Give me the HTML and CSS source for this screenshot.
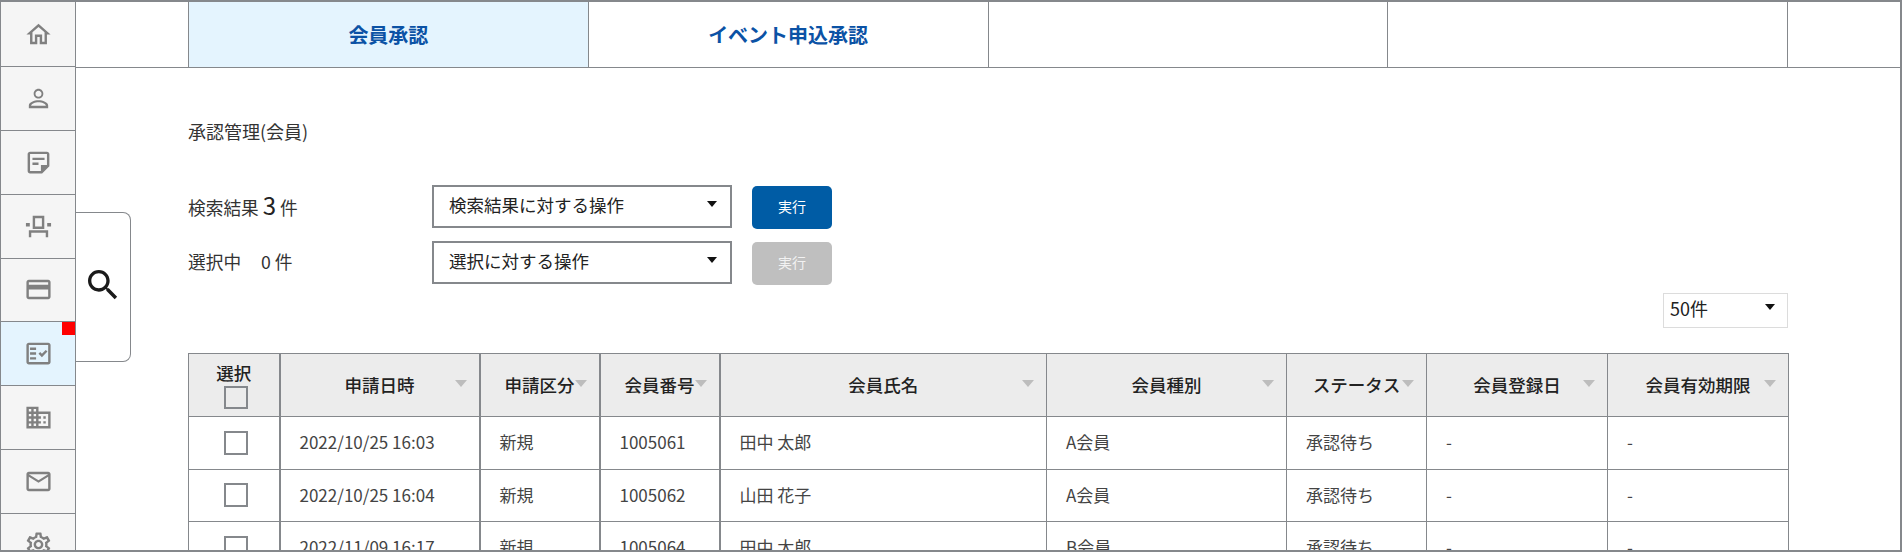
FILE: index.html
```html
<!DOCTYPE html>
<html lang="ja">
<head>
<meta charset="utf-8">
<title>承認管理(会員)</title>
<link rel="stylesheet" href="styles.css">
</head>
<body>
<div class="frame">
  <nav class="side">
    <a class="side-item"><svg class="ico" viewBox="0 0 24 24"><path d="M12 5.69l5 4.5V18h-2v-6H9v6H7v-7.81l5-4.5M12 3L2 12h3v8h6v-6h2v6h6v-8h3L12 3z"/></svg></a>
    <a class="side-item"><svg class="ico" viewBox="0 0 24 24"><path d="M12 5.500c1.400 0 2.500 1.100 2.500 2.500s-1.100 2.500-2.500 2.500S9.500 9.400 9.500 8s1.100-2.500 2.500-2.500M12 4C9.800 4 8 5.800 8 8s1.800 4 4 4 4-1.800 4-4-1.800-4-4-4zM12 13.500c-3.500 0-8 1.700-8 4.200V20h16v-2.300c0-2.500-4.500-4.200-8-4.200zm0 1.700c2.800 0 5.800 1.200 6.100 2.900H5.900c.3-1.700 3.300-2.900 6.100-2.900z"/></svg></a>
    <a class="side-item"><svg class="ico" viewBox="0 0 24 24"><path d="M19 5v9h-5v5H5V5h14m0-2H5C3.900 3 3 3.900 3 5v14c0 1.100.9 2 2 2h10l6-6V5c0-1.100-.9-2-2-2zM12 14H7v-2h5v2zM17 10H7V8h10v2z"/></svg></a>
    <a class="side-item"><svg class="ico" viewBox="0 0 30 30"><path d="M9 4h12v13.500H9V4zm2.500 2.500V15h7V6.500h-7zM2 11.500h4V15H2zM24 11.500h4V15h-4zM5 19h20v7h-2.500v-4.500h-15V26H5v-7z"/></svg></a>
    <a class="side-item"><svg class="ico" viewBox="0 0 24 24"><path d="M20 4H4c-1.110 0-1.990.89-1.990 2L2 18c0 1.110.89 2 2 2h16c1.110 0 2-.89 2-2V6c0-1.110-.89-2-2-2zm0 14H4v-6h16v6zm0-10H4V6h16v2z"/></svg></a>
    <a class="side-item is-active"><span class="badge"></span><svg class="ico" viewBox="0 0 24 24"><path d="M20 3H4c-1.100 0-2 .9-2 2v14c0 1.100.9 2 2 2h16c1.100 0 2-.9 2-2V5c0-1.100-.9-2-2-2zm0 16H4V5h16v14z"/><path d="M19.410 10.420l-1.420-1.420-3.170 3.170-1.410-1.420L12 12.170 14.820 15zM5 7h5v2H5zM5 11h5v2H5zM5 15h5v2H5z"/></svg></a>
    <a class="side-item"><svg class="ico" viewBox="0 0 24 24"><path d="M12 7V3H2v18h20V7H12zM6 19H4v-2h2v2zm0-4H4v-2h2v2zm0-4H4V9h2v2zm0-4H4V5h2v2zm4 12H8v-2h2v2zm0-4H8v-2h2v2zm0-4H8V9h2v2zm0-4H8V5h2v2zm10 12h-8v-2h2v-2h-2v-2h2v-2h-2V9h8v10zm-2-8h-2v2h2v-2zm0 4h-2v2h2v-2z"/></svg></a>
    <a class="side-item"><svg class="ico" viewBox="0 0 24 24"><path d="M20 4H4c-1.100 0-1.990.9-1.990 2L2 18c0 1.100.9 2 2 2h16c1.100 0 2-.9 2-2V6c0-1.100-.9-2-2-2zm0 14H4V8l8 5 8-5v10zm-8-7L4 6h16l-8 5z"/></svg></a>
    <a class="side-item"><svg class="ico" viewBox="0 0 24 24"><path d="M19.430 12.980c.04-.32.07-.64.07-.98 0-.34-.03-.66-.07-.98l2.110-1.650c.19-.15.24-.42.12-.64l-2-3.460c-.09-.16-.26-.25-.44-.25-.06 0-.12.01-.17.03l-2.490 1c-.52-.4-1.080-.73-1.690-.98l-.38-2.650C14.460 2.180 14.250 2 14 2h-4c-.25 0-.46.18-.49.42l-.38 2.650c-.61.25-1.170.59-1.690.98l-2.490-1c-.06-.02-.12-.03-.18-.03-.17 0-.34.09-.43.25l-2 3.460c-.13.22-.07.49.12.64l2.110 1.650c-.04.32-.07.65-.07.98 0 .33.03.66.07.98l-2.110 1.650c-.19.15-.24.42-.12.64l2 3.460c.09.16.26.25.44.25.06 0 .12-.01.17-.03l2.490-1c.52.4 1.080.73 1.690.98l.38 2.650c.03.24.24.42.49.42h4c.25 0 .46-.18.49-.42l.38-2.650c.61-.25 1.170-.59 1.690-.98l2.490 1c.06.02.12.03.18.03.17 0 .34-.09.43-.25l2-3.460c.12-.22.07-.49-.12-.64l-2.110-1.650zm-1.980-1.710c.04.31.05.52.05.73 0 .21-.02.43-.05.73l-.14 1.130.89.7 1.080.84-.7 1.210-1.270-.51-1.040-.42-.9.68c-.43.32-.84.56-1.250.73l-1.060.43-.16 1.130-.2 1.350h-1.400l-.19-1.350-.16-1.130-1.060-.43c-.43-.18-.83-.41-1.230-.71l-.91-.7-1.060.43-1.270.51-.7-1.210 1.080-.84.89-.7-.14-1.130c-.03-.31-.05-.54-.05-.74s.02-.43.05-.73l.14-1.130-.89-.7-1.080-.84.7-1.210 1.270.51 1.040.42.9-.68c.43-.32.84-.56 1.250-.73l1.060-.43.16-1.130.2-1.350h1.390l.19 1.350.16 1.130 1.060.43c.43.18.83.41 1.230.71l.91.7 1.060-.43 1.270-.51.7 1.210-1.070.85-.89.7.14 1.130zM12 8c-2.210 0-4 1.790-4 4s1.790 4 4 4 4-1.790 4-4-1.790-4-4-4zm0 6c-1.100 0-2-.9-2-2s.9-2 2-2 2 .9 2 2-.9 2-2 2z"/></svg></a>
  </nav>
  <div class="main">
    <div class="tabs">
      <a class="tab is-current">会員承認</a>
      <a class="tab">イベント申込承認</a>
      <a class="tab"></a>
      <a class="tab"></a>
    </div>
    <button class="search-toggle" aria-label="検索"><svg viewBox="0 0 24 24"><path d="M15.500 14h-.79l-.28-.27C15.410 12.590 16 11.110 16 9.500 16 5.910 13.090 3 9.500 3S3 5.910 3 9.500 5.910 16 9.500 16c1.610 0 3.090-.59 4.230-1.570l.27.28v.79l5 4.990L20.490 19l-4.990-5zm-6 0C7.010 14 5 11.990 5 9.500S7.010 5 9.500 5 14 7.010 14 9.500 11.990 14 9.500 14z"/></svg></button>
    <div class="content">
      <h1 class="title">承認管理(会員)</h1>
      <div class="ops">
        <div class="op-row">
          <div class="count">検索結果 <b class="num">3</b> 件</div>
          <div class="select">検索結果に対する操作</div>
          <button class="run">実行</button>
        </div>
        <div class="op-row">
          <div class="count">選択中<span class="zero">0 件</span></div>
          <div class="select">選択に対する操作</div>
          <button class="run is-off">実行</button>
        </div>
      </div>
      <div class="pager"><div class="per">50件</div></div>
      <table class="grid">
        <colgroup><col class="c1"><col class="c2"><col class="c3"><col class="c4"><col class="c5"><col class="c6"><col class="c7"><col class="c8"><col class="c9"></colgroup>
        <thead>
          <tr>
            <th class="chk-head">選択<span class="box"></span></th>
            <th class="sort">申請日時</th>
            <th class="sort">申請区分</th>
            <th class="sort">会員番号</th>
            <th class="sort">会員氏名</th>
            <th class="sort">会員種別</th>
            <th class="sort">ステータス</th>
            <th class="sort">会員登録日</th>
            <th class="sort">会員有効期限</th>
          </tr>
        </thead>
        <tbody>
          <tr><td class="chk"><span class="box"></span></td><td>2022/10/25 16:03</td><td>新規</td><td>1005061</td><td>田中 太郎</td><td>A会員</td><td>承認待ち</td><td>-</td><td>-</td></tr>
          <tr><td class="chk"><span class="box"></span></td><td>2022/10/25 16:04</td><td>新規</td><td>1005062</td><td>山田 花子</td><td>A会員</td><td>承認待ち</td><td>-</td><td>-</td></tr>
          <tr><td class="chk"><span class="box"></span></td><td>2022/11/09 16:17</td><td>新規</td><td>1005064</td><td>田中 太郎</td><td>B会員</td><td>承認待ち</td><td>-</td><td>-</td></tr>
        </tbody>
      </table>
    </div>
  </div>
</div>
</body>
</html>
```
FILE: styles.css
```css
* { box-sizing: border-box; }
html, body { margin: 0; height: 100%; overflow: hidden; background: #fff; }
body { font-family: "Noto Sans CJK JP", "Noto Sans", sans-serif; color: #333; font-size: 14px; }
.frame { display: flex; height: 552px; border: solid #85888c; border-width: 2px 2px 2px 1px; overflow: hidden; }
.side { width: 75px; flex: none; padding-top: 1.5px; border-right: 1px solid #85888c; background: #f5f5f5; }
.side-item { position: relative; display: flex; align-items: center; justify-content: center; height: 63.75px; border-bottom: 1px solid #85888c; }
.side-item.is-active { background: #e4f4fe; }
.ico { width: 29px; height: 29px; fill: #808080; }
.badge { position: absolute; top: 0; right: 0; width: 13px; height: 13px; background: #f00; }
.main { position: relative; flex: 1; min-width: 0; }
.tabs { display: flex; height: 66px; padding: 0 112px; border-bottom: 1px solid #85888c; }
.tab { flex: 1; display: flex; align-items: center; justify-content: center; border-left: 1px solid #85888c; color: #0b52a5; font-weight: 700; font-size: 20px; }
.tab:last-child { border-right: 1px solid #85888c; }
.tab.is-current { background: #e4f4fe; }
.search-toggle { position: absolute; left: 0; top: 210px; width: 55px; height: 150px; padding: 0 0 5px; background: #fff; border: 1px solid #85888c; border-left: 0; border-radius: 0 8px 8px 0; display: flex; align-items: center; justify-content: center; }
.search-toggle svg { width: 40px; height: 40px; fill: #1a1a1a; }
.content { padding: 0 112px; }
.title { margin: 0; padding-top: 51px; font-size: 18px; font-weight: 400; line-height: 24px; }
.ops { margin-top: 42px; display: flex; flex-direction: column; gap: 13px; }
.op-row { display: flex; align-items: center; height: 43px; }
.count { width: 244px; padding-bottom: 4px; font-size: 17.7px; }
.num { font-weight: 400; font-size: 24px; color: #222; }
.zero { margin-left: 20px; }
.select { position: relative; width: 300px; height: 43px; border: 2px solid #85888c; padding-left: 15px; font-size: 17.5px; line-height: 35px; color: #222; }
.select::after { content: ""; position: absolute; right: 13px; top: 14px; border: 5px solid transparent; border-top: 6px solid #111; border-bottom: 0; }
.run { margin: 2px 0 0 20px; width: 80px; height: 43px; border: 0; border-radius: 5px; background: #005ca5; color: #fff; font: inherit; font-size: 14px; padding: 0 0 4px; }
.run.is-off { background: #bfbfbf; color: #f2f2f2; }
.pager { display: flex; justify-content: flex-end; margin-top: 9px; }
.per { position: relative; width: 125px; height: 35px; border: 1px solid #dcdcdc; padding-left: 6px; font-size: 18px; line-height: 29px; color: #222; }
.per::after { content: ""; position: absolute; right: 12px; top: 10px; border: 5px solid transparent; border-top: 6px solid #111; border-bottom: 0; }
.grid { margin-top: 25px; width: 1600px; border-collapse: collapse; table-layout: fixed; }
.c1 { width: 91px; } .c2 { width: 200px; } .c3, .c4 { width: 120px; } .c5 { width: 327px; } .c6 { width: 240px; } .c7 { width: 140px; } .c8 { width: 181px; } .c9 { width: 181px; }
th, td { border: 1px solid #85888c; padding: 0; }
tr > :nth-child(-n+4) { border-right-width: 2px; }
th { position: relative; height: 63px; padding-bottom: 2px; background: #ececec; font-size: 17.5px; font-weight: 500; color: #222; text-align: center; }
td { height: 52.5px; padding: 0 0 2px 19px; font-size: 17px; text-align: left; color: #444; }
td.chk { padding: 0; }
.chk-head { padding: 1px 0 0; line-height: 20px; }
.box { display: block; margin: 0 0 0 35px; width: 24px; height: 24px; border: 2px solid #85888c; background: #fff; }
.chk-head .box { margin-top: 3px; height: 23px; background: #ececec; }
.sort::after { content: ""; position: absolute; right: 12px; top: 26px; border: 6px solid transparent; border-top: 7px solid #bdbdbd; border-bottom: 0; }
```
